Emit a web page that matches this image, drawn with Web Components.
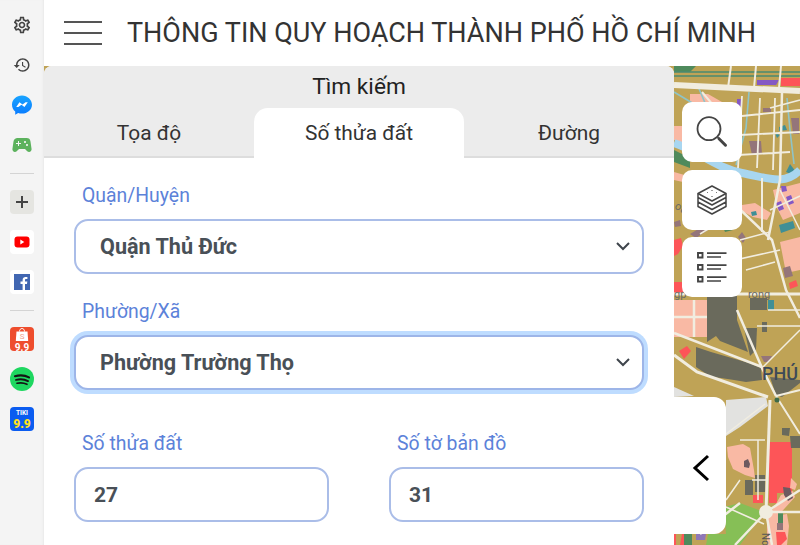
<!DOCTYPE html>
<html lang="vi">
<head>
<meta charset="utf-8">
<title>Thông tin quy hoạch</title>
<style>
    html, body { margin: 0; height: 545px; overflow: hidden; background: #fff; }
    body { display: flex; font-family: Roboto, "Liberation Sans", sans-serif; }
    main-area { flex: 1; }
</style>
</head>
<body>
<side-rail>
    <rail-icon><svg width="20" height="20" viewBox="0 0 24 24" fill="#444"><path d="M19.43 12.98c.04-.32.07-.64.07-.98 0-.34-.03-.66-.07-.98l2.11-1.65c.19-.15.24-.42.12-.64l-2-3.46c-.09-.16-.26-.25-.44-.25-.06 0-.12.01-.17.03l-2.49 1c-.52-.4-1.08-.73-1.69-.98l-.38-2.65C14.46 2.18 14.25 2 14 2h-4c-.25 0-.46.18-.49.42l-.38 2.65c-.61.25-1.17.59-1.69.98l-2.49-1c-.06-.02-.12-.03-.18-.03-.17 0-.34.09-.43.25l-2 3.46c-.13.22-.07.49.12.64l2.11 1.65c-.04.32-.07.65-.07.98 0 .33.03.66.07.98l-2.11 1.65c-.19.15-.24.42-.12.64l2 3.46c.09.16.26.25.44.25.06 0 .12-.01.17-.03l2.49-1c.52.4 1.08.73 1.69.98l.38 2.65c.03.24.24.42.49.42h4c.25 0 .46-.18.49-.42l.38-2.65c.61-.25 1.17-.59 1.69-.98l2.49 1c.06.02.12.03.18.03.17 0 .34-.09.43-.25l2-3.46c.12-.22.07-.49-.12-.64l-2.11-1.65zm-1.98-1.71c.04.31.05.52.05.73 0 .21-.02.43-.05.73l-.14 1.13.89.7 1.08.84-.7 1.21-1.27-.51-1.04-.42-.9.68c-.43.32-.84.56-1.25.73l-1.06.43-.16 1.13-.2 1.35h-1.4l-.19-1.35-.16-1.13-1.06-.43c-.43-.18-.83-.41-1.23-.71l-.91-.7-1.06.43-1.27.51-.7-1.21 1.08-.84.89-.7-.14-1.13c-.03-.31-.05-.54-.05-.74s.02-.43.05-.73l.14-1.13-.89-.7-1.08-.84.7-1.21 1.27.51 1.04.42.9-.68c.43-.32.84-.56 1.25-.73l1.06-.43.16-1.13.2-1.35h1.39l.19 1.35.16 1.13 1.06.43c.43.18.83.41 1.23.71l.91.7 1.06-.43 1.27-.51.7 1.21-1.07.85-.89.7.14 1.13zM12 8c-2.21 0-4 1.79-4 4s1.79 4 4 4 4-1.79 4-4-1.79-4-4-4zm0 6c-1.1 0-2-.9-2-2s.9-2 2-2 2 .9 2 2-.9 2-2 2z"/></svg></rail-icon>
    <rail-icon><svg width="18" height="18" viewBox="0 0 24 24" fill="#444"><path d="M13 3c-4.97 0-9 4.03-9 9H1l3.89 3.89.07.14L9 12H6c0-3.87 3.13-7 7-7s7 3.13 7 7-3.13 7-7 7c-1.93 0-3.68-.79-4.94-2.06l-1.42 1.42C8.27 19.99 10.51 21 13 21c4.97 0 9-4.03 9-9s-4.03-9-9-9zm-1 5v5l4.28 2.54.72-1.21-3.5-2.08V8H12z"/></svg></rail-icon>
    <rail-icon><svg width="22" height="22" viewBox="0 0 24 24"><defs><linearGradient id="ms" x1="0" y1="1" x2="0" y2="0"><stop offset="0" stop-color="#0a7cff"/><stop offset="1" stop-color="#19a4ff"/></linearGradient></defs><path fill="url(#ms)" d="M12 1.500C6 1.500 1.100 5.900 1.100 11.600c0 3 1.300 5.600 3.500 7.400v3.500l3.200-1.800c1.300.4 2.700.6 4.200.6 6 0 10.900-4.400 10.900-9.700S18 1.500 12 1.500z"/><path fill="#fff" d="M5.700 14.300l3.500-5.300 3.400 2.500 3.300-2.500 2.400-.1-3.600 5.300-3.300-2.500-3.400 2.500z"/></svg></rail-icon>
    <rail-icon><svg width="24" height="24" viewBox="0 0 24 24" fill="#5cb25d"><path d="M21.58 16.09l-1.09-7.66A3.996 3.996 0 0 0 16.53 5H7.47C5.48 5 3.790 6.460 3.510 8.430l-1.090 7.660C2.200 17.630 3.390 19 4.940 19c.680 0 1.320-.270 1.800-.750L9 16h6l2.250 2.250c.480.480 1.130.750 1.800.750 1.560 0 2.750-1.370 2.530-2.910zM11 11H9v2H8v-2H6v-1h2V8h1v2h2v1zm4-1c-.550 0-1-.450-1-1s.450-1 1-1 1 .450 1 1-.450 1-1 1zm2 3c-.550 0-1-.450-1-1s.450-1 1-1 1 .450 1 1-.450 1-1 1z"/></svg></rail-icon>
    <rail-rule></rail-rule>
    <rail-icon tile="#e5e5e1"><svg width="14" height="14" viewBox="0 0 14 14" stroke="#444" stroke-width="2"><path d="M7 1v12M1 7h12"/></svg></rail-icon>
    <rail-icon tile="#fff"><svg width="16" height="12" viewBox="0 0 16 12"><rect width="15" height="11" x=".5" y=".5" rx="3" fill="#f00"/><path d="M6.300 3.600v4.800L10.300 6z" fill="#fff"/></svg></rail-icon>
    <rail-icon tile="#fff"><svg width="16" height="16" viewBox="0 0 16 16"><rect width="16" height="16" fill="#4267b2"/><path fill="#fff" d="M11 16v-6h2l.3-2.400H11V6.200c0-.7.2-1.100 1.200-1.100h1.200V3c-.3 0-1-.1-1.800-.1-1.800 0-3 1.100-3 3.100v1.600H6.500V10h2.100v6z"/></svg></rail-icon>
    <rail-rule></rail-rule>
    <rail-icon tile="#ee4d2d"><svg width="24" height="24" viewBox="0 0 24 24"><path d="M6.500 4.500h11l.7 9.500H5.800z" fill="#fff"/><path d="M9.500 4.500c0-4 5-4 5 0" fill="none" stroke="#fff" stroke-width="1"/><text x="12" y="11.500" text-anchor="middle" font-family="Roboto" font-size="8" fill="#f3a08c">S</text><text x="12" y="23.500" text-anchor="middle" font-family="Roboto" font-weight="700" font-size="10" fill="#fff">9.9</text></svg></rail-icon>
    <rail-icon tile="#1ed760" round><svg width="24" height="24" viewBox="0 0 24 24" fill="none" stroke="#141414" stroke-linecap="round"><path d="M5 9.200c4.500-1.300 10-1 14 1.200" stroke-width="2.200"/><path d="M6 12.900c4-1 8.500-.7 12 1.200" stroke-width="1.900"/><path d="M7 16.300c3.500-.8 7-.5 10 1" stroke-width="1.600"/></svg></rail-icon>
    <rail-icon tile="#0b5cf0"><svg width="24" height="24" viewBox="0 0 24 24"><text x="12" y="7.500" text-anchor="middle" font-family="Roboto" font-weight="700" font-size="6.500" fill="#fff">TIKI</text><text x="12" y="21" text-anchor="middle" font-family="Roboto" font-weight="900" font-size="12" fill="#ffe11b">9.9</text></svg></rail-icon>
</side-rail>

<main-area>
    <top-bar>THÔNG TIN QUY HOẠCH THÀNH PHỐ HỒ CHÍ MINH</top-bar>
    <map-stage>
        <search-panel>
            <plan-field label="Quận/Huyện" kind="select">Quận Thủ Đức</plan-field>
            <plan-field label="Phường/Xã" kind="select" focused>Phường Trường Thọ</plan-field>
            <div slot="row">
                <plan-field label="Số thửa đất">27</plan-field>
                <plan-field label="Số tờ bản đồ">31</plan-field>
            </div>
        </search-panel>
        <map-button slot="tools" style="top:36px"><svg width="36" height="36" viewBox="0 0 36 36" fill="none" stroke="#444"><circle cx="15" cy="14.700" r="11.500" stroke-width="1.800"/><path d="M23.500 23.200l2.500 2.500" stroke-width="1.500"/><path d="M25 24.700l6.500 6.500" stroke-width="3" stroke-linecap="round"/></svg></map-button>
        <map-button slot="tools" style="top:104px"><svg width="32" height="32" viewBox="0 0 32 32" fill="none" stroke="#444" stroke-width="1.500" stroke-linejoin="round"><path d="M16 2L30 9.500 16 17 2 9.500z"/><path d="M2 9.500v4L16 21l14-7.500v-4M2 13.500v4.500L16 25.500 30 18v-4.500M2 18v4.500L16 30l14-7.500V18"/><path d="M11 8l1 1M16 6v1.500M21 8l-1 1M16 12v1" stroke-width="1" stroke-dasharray="1 1"/></svg></map-button>
        <map-button slot="tools" style="top:171px"><svg width="32" height="32" viewBox="0 0 32 32" fill="none" stroke="#444"><path d="M2 2h4.500v4.500H2zM2 14h4.500v4.500H2zM2 26h4.500v4.500H2z" stroke-width="1.900"/><path d="M11 2.200h19.500M11 6h14M11 14.200h19.500M11 18h14M11 26.200h19.500M11 30h14" stroke-width="1.700"/></svg></map-button>
        <map-collapse slot="tools"></map-collapse>
    </map-stage>
</main-area>

<script>
class SideRail extends HTMLElement {
    constructor() {
        super();
        this.attachShadow({ mode: 'open' });
        this.shadowRoot.innerHTML = `
            <style>
                :host {
                    display: flex;
                    flex-direction: column;
                    align-items: center;
                    box-sizing: border-box;
                    width: 44px;
                    height: 545px;
                    padding-top: 13px;
                    background: #f4f4f4;
                    box-shadow: inset -2px 0 2px -1px #e9e9e9;
                    flex: none;
                }
            </style>
            <slot></slot>
        `;
    }
}

class RailIcon extends HTMLElement {
    constructor() {
        super();
        this.attachShadow({ mode: 'open' });
        const tile = this.getAttribute('tile');
        const radius = this.hasAttribute('round') ? '50%' : '4px';
        this.shadowRoot.innerHTML = `
            <style>
                :host {
                    display: flex;
                    align-items: center;
                    justify-content: center;
                    flex: none;
                    width: 24px;
                    height: 24px;
                    margin-bottom: 16px;
                    overflow: hidden;
                    border-radius: ${radius};
                    background: ${tile || 'transparent'};
                }
            </style>
            <slot></slot>
        `;
    }
}

class RailRule extends HTMLElement {
    constructor() {
        super();
        this.attachShadow({ mode: 'open' });
        this.shadowRoot.innerHTML = `
            <style>
                :host {
                    display: block;
                    flex: none;
                    width: 24px;
                    height: 1px;
                    margin-bottom: 16px;
                    background: #d4d4d4;
                }
            </style>
        `;
    }
}

class TopBar extends HTMLElement {
    constructor() {
        super();
        this.attachShadow({ mode: 'open' });
        this.shadowRoot.innerHTML = `
            <style>
                :host {
                    display: flex;
                    align-items: center;
                    box-sizing: border-box;
                    height: 66px;
                    padding-left: 20px;
                    background: #fff;
                    color: #333;
                    font-size: 27px;
                    white-space: nowrap;
                }
                .burger {
                    display: flex;
                    flex-direction: column;
                    gap: 9px;
                    width: 38px;
                    margin-right: 25px;
                }
                .burger i { display: block; height: 2px; background: #555; }
            </style>
            <div class="burger"><i></i><i></i><i></i></div>
            <slot></slot>
        `;
    }
}

class MapStage extends HTMLElement {
    constructor() {
        super();
        this.attachShadow({ mode: 'open' });
        const road = (d, w) => `<path d="${d}" fill="none" stroke="#f1ede0" stroke-width="${w}"/>`;
        const fill = (c, d) => `<path d="${d}" fill="${c}"/>`;
        const pink = '#f9b9a4', red = '#fd5558', dark = '#6a6a5c', mauve = '#94757a', teal = '#3f8f96', violet = '#8458c4', leaf = '#4f8a5c';
        this.shadowRoot.innerHTML = `
            <style>
                :host {
                    display: block;
                    position: relative;
                    height: 479px;
                    overflow: hidden;
                }
                svg { position: absolute; left: 0; top: 0; }
                .soft { filter: blur(.55px); }
            </style>
            <svg width="756" height="479" viewBox="44 66 756 479">
                <rect x="44" y="66" width="756" height="479" fill="#bfa356"/>
                <g class="soft">
                    ${fill(leaf, 'M674 66h22l-6 6h-16zM674 150l16 8v10l-16-6z')}
                    ${fill(pink, 'M690 94h18l14 8-24 14h-8zM674 126h12v18l-12-4zM674 172l14 4 4 8-18-4z')}
                    ${fill(violet, 'M757 80h22l-3 5h-19zM737 99h4v7h-4z')}
                    ${fill(red, 'M781 78h19v8h-19z')}
                    ${fill(mauve, 'M749 141h12l1 13-10 1zM791 118h8v16h-6zM763 108h8v4h-8z')}
                    ${fill(teal, 'M779 127l6-2 2 5-8 1zM786 172l4-8 6 8-3 3zM775 133l5 2-3 3z')}
                    ${fill(pink, 'M773 190l27-7v30l-17 7-6-12zM780 242l20-5v33l-14 3zM742 205l13-2 16 10-4 7-14-3-11-6zM674 300h33v37h-33z')}
                    ${fill(violet, 'M776 203l5-2 3 8-5 2zM786 197l5-2 3 8-5 2zM781 186h5l1 5-5 1zM753 300l5-1v6h-5z')}
                    ${fill(teal, 'M779 225l14-4 2 7-14 5zM751 212l5-1 1 4-5 1zM768 300h6v10h-6z')}
                    ${fill(mauve, 'M690 234l10-6 8 2-12 8zM674 222l6-2 1 6-6 1zM738 237l4-5 4 6-3 5zM783 268l7-2 3 10-8 2z')}
                    ${fill(red, 'M674 240l7-2 2 8-5 8-4 2zM674 282h16v13h-16zM789 283l7-3 2 6-8 3z')}
                    ${fill(leaf, 'M723 227l8-3 2 6-8 2z')}
                    ${fill(dark, 'M707 296H737V320L748 352L720 341L716 336L707 342z')}
                    ${fill(dark, 'M696 347L711 352L749 363L761 368L762 380L746 382L734 380L721 378L711 377L696 367z')}
                    ${fill(dark, 'M744 328H757L756 350L750 356z')}
                    ${fill(dark, 'M770 377L800 380V383L782 397L776 395z')}
                    ${fill(dark, 'M750 298h17v12h-17z')}
                    ${fill(mauve, 'M761 356h11l-3 6h-5z')}
                    ${fill(red, 'M679 351l8-5 4 5-7 8z')}
                    ${fill('#e2e2e0', 'M674 387L694 396L674 397z')}
                    ${fill('#e2e2e0', 'M717 392L726 400L766 397L768 406L740 427L726 436V400z')}
                    ${fill(pink, 'M727 447l16-3 7 4 4 22 1 8-10-3-12-6-5-12z')}
                    ${fill('#6e5a60', 'M744 461l4-2 2 5-1 4-5-1z')}
                    ${fill(red, 'M769 442h23v51h-23zM769 493h8v10h-8zM753 495h10v8h-10z')}
                    ${fill(pink, 'M781 495l12-4 2 6-20 22-7-1zM791 478l6 6-2 6-5-2zM767 517l20-3 2 12-2 19h-20z')}
                    ${fill('#6e5a60', 'M783 487l7 1 3 10-5 3-4-6z')}
                    ${fill(dark, 'M755 475h10v17h-10zM745 480h8v15h-8z')}
                    ${fill('#86bf56', 'M724 507l16-4 24 9-24 33h-34l2-11h18z')}
                    ${fill(red, 'M776 532h9l2 7-6 6h-4zM682 534h4l-2 11h-4zM674 534h2v11h-2z')}
                    ${fill('#8f78b8', 'M696 534h10l-1 6h-9z')}
                    ${fill(mauve, 'M777 523h6v7h-6z')}
                    ${fill(leaf, 'M684 534h8v11h-8zM778 512h5v11h-5z')}
                    ${fill(dark, 'M762 322h5v10h-5zM782 428h8l-1 8-7-1zM790 436h10v12h-9z')}

                    <path d="M674 143C700 152 716 168 742 173S784 186 800 170" fill="none" stroke="#a8d6f0" stroke-width="8"/>
                    <path d="M749 92L746 128 736 165M787 98L790 130 794 164M697 84L708 110M674 92L694 104" fill="none" stroke="#8ec4c8" stroke-width="1.600"/>
                    <path d="M674 72H800M674 76H800" fill="none" stroke="#4a8a72" stroke-width="1.500"/>
                    ${road('M674 85L800 91', 6)}
                    ${road('M731 66L728 88M756 66L754 88M781 66L779 88', 2)}
                    ${road('M742 96L738 168M760 98L757 168M775 98L773 170M800 100L770 108M742 116L800 110M740 135L800 132M738 155L790 152', 1.800)}
                    ${road('M702 92L730 125', 2)}
                    ${road('M782 92L780 180L768 240', 2.500)}
                    ${road('M726 196L772 240L786 290L800 318', 2.500)}
                    ${road('M762 178L762 232', 2)}
                    ${road('M740 240L770 232M726 262L780 250M746 270L775 262M700 234L740 210', 1.500)}
                    ${road('M780 190L800 230M770 210L800 196', 1.500)}
                    ${road('M674 294H800', 3)}
                    ${road('M694 300V337M674 317H707', 2.500)}
                    ${road('M674 333L762 367', 2.500)}
                    ${road('M737 310L762 368L776 396', 2.500)}
                    ${road('M770 400L766 512', 3)}
                    ${road('M674 355L697 372L768 397', 3)}
                    ${road('M762 368L800 330M757 326H800M768 310H800', 1.500)}
                    ${road('M776 396L800 434M776 396L800 390', 2)}
                    ${road('M758 440V500M726 434L765 404M740 440H765M752 480H766', 1.500)}
                    ${road('M766 512L800 490M766 512L735 545M766 512H800M766 512L772 545M700 534L740 503', 2.500)}
                    ${road('M726 507L764 524M740 480L726 500', 1.500)}
                    <circle cx="766" cy="512" r="7" fill="#f1ede0"/>
                    <circle cx="777" cy="400" r="2.500" fill="#3e6b48"/>
                </g>
                <g font-family="Roboto, sans-serif">
                    <text x="762" y="380" font-size="18" font-weight="500" fill="#3d4a58">PHÚ</text>
                    <text x="748" y="298" font-size="11" fill="#6a6a66">rong</text>
                    <text x="674" y="298" font-size="11" fill="#6a6a66">gp</text>
                    <text x="674" y="208" font-size="11" fill="#6a6a66" transform="rotate(30 674 208)">ou</text>
                    <text transform="translate(762 533) rotate(90)" font-size="10" fill="#555">No</text>
                </g>
            </svg>
            <slot></slot>
            <slot name="tools"></slot>
        `;
    }
}

class SearchPanel extends HTMLElement {
    constructor() {
        super();
        this.attachShadow({ mode: 'open' });
        this.shadowRoot.innerHTML = `
            <style>
                :host {
                    display: block;
                    position: relative;
                    width: 630px;
                    height: 479px;
                    border-radius: 8px 8px 0 0;
                    overflow: hidden;
                    background: #fff;
                }
                .head {
                    height: 90px;
                    background: #ececec;
                    border-bottom: 2px solid #ddd;
                    text-align: center;
                    color: #222;
                }
                .title { height: 42px; line-height: 42px; font-size: 22.700px; }
                .tabs { display: grid; grid-template-columns: repeat(3, 210px); height: 48px; }
                .tabs div { line-height: 50px; font-size: 20.900px; color: #333; border-radius: 14px 14px 0 0; }
                .tabs .on { background: #fff; }
                .body { display: flex; flex-direction: column; gap: 25px; padding: 25px 30px 0; }
                ::slotted([slot="row"]) {
                    display: grid;
                    grid-template-columns: 255px 255px;
                    justify-content: space-between;
                    margin-top: 16px;
                }
            </style>
            <div class="head">
                <div class="title">Tìm kiếm</div>
                <div class="tabs">
                    <div>Tọa độ</div>
                    <div class="on">Số thửa đất</div>
                    <div>Đường</div>
                </div>
            </div>
            <div class="body">
                <slot></slot>
                <slot name="row"></slot>
            </div>
        `;
    }
}

class PlanField extends HTMLElement {
    constructor() {
        super();
        this.attachShadow({ mode: 'open' });
        const isSelect = this.getAttribute('kind') === 'select';
        this.shadowRoot.innerHTML = `
            <style>
                :host { display: block; }
                label {
                    display: block;
                    height: 24px;
                    line-height: 26px;
                    margin: 0 0 12px 8px;
                    font-size: 19.400px;
                    color: #5c82d9;
                }
                .box {
                    display: flex;
                    align-items: center;
                    justify-content: space-between;
                    box-sizing: border-box;
                    height: 55px;
                    padding: 0 ${isSelect ? '12px 0 24px' : '18px'};
                    border: 2px solid ${this.hasAttribute('focused') ? '#9db5e8' : '#aabde8'};
                    border-radius: 14px;
                    background: #fff;
                    color: #495057;
                    font-size: ${isSelect ? 21.600 : 21}px;
                    font-weight: 700;
                    ${this.hasAttribute('focused') ? 'box-shadow: 0 0 0 4px #bedcff;' : ''}
                }
                svg { flex: none; }
            </style>
            <label>${this.getAttribute('label')}</label>
            <div class="box">
                <span><slot></slot></span>
                ${isSelect ? '<svg width="14" height="9" viewBox="0 0 14 9" fill="none" stroke="#3f454c" stroke-width="2"><path d="M1 1l6 6 6-6"/></svg>' : ''}
            </div>
        `;
    }
}

class MapButton extends HTMLElement {
    constructor() {
        super();
        this.attachShadow({ mode: 'open' });
        this.shadowRoot.innerHTML = `
            <style>
                :host {
                    display: flex;
                    align-items: center;
                    justify-content: center;
                    position: absolute;
                    left: 638px;
                    width: 60px;
                    height: 60px;
                    border-radius: 10px;
                    background: #fff;
                }
            </style>
            <slot></slot>
        `;
    }
}

class MapCollapse extends HTMLElement {
    constructor() {
        super();
        this.attachShadow({ mode: 'open' });
        this.shadowRoot.innerHTML = `
            <style>
                :host {
                    display: flex;
                    align-items: center;
                    justify-content: flex-end;
                    position: absolute;
                    left: 630px;
                    top: 331px;
                    box-sizing: border-box;
                    width: 52px;
                    height: 137px;
                    padding: 4px 16px 0 0;
                    border-radius: 0 12px 12px 0;
                    background: #fff;
                }
            </style>
            <svg width="18" height="28" viewBox="0 0 18 28" fill="none" stroke="#000" stroke-width="3"><path d="M16 2L3 14l13 12"/></svg>
        `;
    }
}

customElements.define('side-rail', SideRail);
customElements.define('rail-icon', RailIcon);
customElements.define('rail-rule', RailRule);
customElements.define('top-bar', TopBar);
customElements.define('map-stage', MapStage);
customElements.define('search-panel', SearchPanel);
customElements.define('plan-field', PlanField);
customElements.define('map-button', MapButton);
customElements.define('map-collapse', MapCollapse);
</script>
</body>
</html>
